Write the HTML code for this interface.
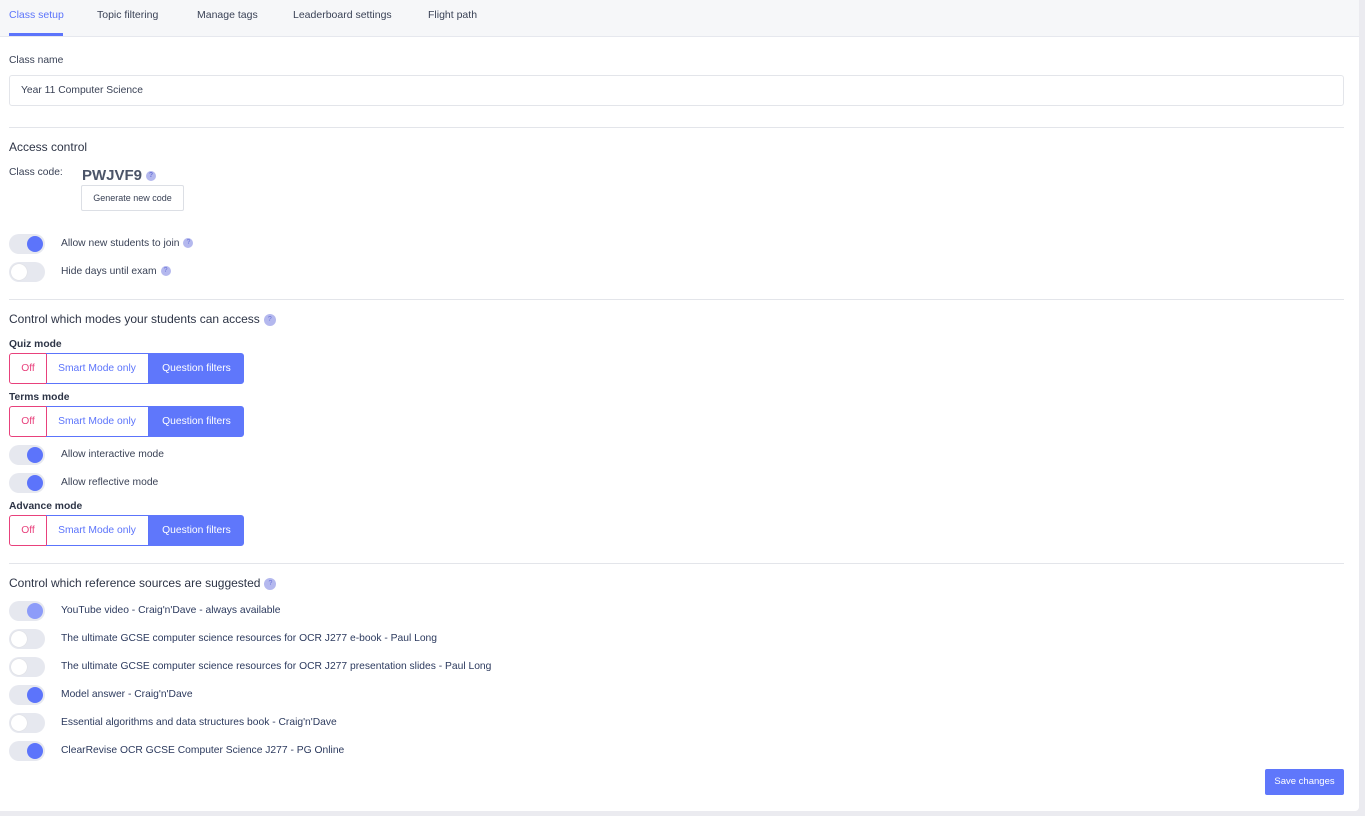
<!DOCTYPE html><html><head><style>
body{margin:0;width:1365px;height:816px;background:#ebebf0;font-family:"Liberation Sans",sans-serif;color:#3a4256;font-size:10.3px;position:relative;overflow:hidden}
.card{position:absolute;left:0;top:0;width:1359px;height:811px;background:#fff;border-radius:0 0 4px 0}
.tabs{position:absolute;left:0;top:0;width:1359px;height:36px;background:#f6f7f9;border-bottom:1px solid #e6e8ee}
.tab{position:absolute;top:9px;font-size:10.5px;color:#3a4256}
.a{position:absolute}
hr{position:absolute;left:9px;width:1335px;border:0;border-top:1px solid #e3e5ea;margin:0}
.h{position:absolute;left:9px;font-size:12px;color:#2d3446}
.q{display:inline-block;width:10px;height:10px;border-radius:50%;background:#b4b8ee;color:#6c74d8;font-size:7px;text-align:center;line-height:10px;vertical-align:middle;margin-left:4px}
.tg{position:absolute;left:9px;width:36px;height:20px;border-radius:10px;background:#e6e8ef}
.tg i{position:absolute;top:2px;width:16px;height:16px;border-radius:50%;background:#fff}
.tg.on i{left:18px;background:#5c74fb}.tg.no i{left:2px;box-shadow:0 0 1px #ccc}
.tg.dis i{left:18px;background:#8d9cf9}
.lb{position:absolute;left:61px}
.bg{position:absolute;left:9px;height:31px;width:235px}
.bg span{position:absolute;top:0;height:29px;line-height:29px;text-align:center;border:1px solid;font-size:10.3px}
.bg .o{left:0;width:36px;border-color:#e8417c;color:#e8417c;border-radius:3px 0 0 3px}
.bg .sm{left:37px;width:102px;border-color:#5c74fb;color:#5c74fb;border-left:0}
.bg .qf{left:140px;width:93px;background:#5f77fb;border-color:#5f77fb;color:#fff;border-radius:0 3px 3px 0}
.ml{position:absolute;left:9px;font-weight:bold;font-size:10.3px;color:#2d3446}
.r{color:#2c3a5e}
</style></head><body><div class="card">
<div class="tabs">
<div class="tab" style="left:9px;color:#5c74fb">Class setup</div>
<div class="a" style="left:9px;top:33px;width:54px;height:3px;background:#5c74fb"></div>
<div class="tab" style="left:97px">Topic filtering</div>
<div class="tab" style="left:197px">Manage tags</div>
<div class="tab" style="left:293px">Leaderboard settings</div>
<div class="tab" style="left:428px">Flight path</div>
</div>
<div class="a" style="left:9px;top:55px">Class name</div>
<div class="a" style="left:9px;top:75px;width:1333px;height:29px;border:1px solid #e3e5ea;border-radius:3px"><span class="a" style="left:11px;top:9px">Year 11 Computer Science</span></div>
<hr style="top:127px">
<div class="h" style="top:140px">Access control</div>
<div class="a" style="left:9px;top:167px">Class code:</div>
<div class="a" style="left:82px;top:167px;font-size:15px;font-weight:bold;color:#4b5468">PWJVF9<span class="q">?</span></div>
<div class="a" style="left:81px;top:185px;width:101px;height:24px;border:1px solid #dcdfe5;border-radius:2px;font-size:9px;text-align:center;line-height:24px">Generate new code</div>
<div class="tg on" style="top:234px"><i></i></div><div class="lb" style="top:238px">Allow new students to join<span class="q">?</span></div>
<div class="tg no" style="top:262px"><i></i></div><div class="lb" style="top:266px">Hide days until exam<span class="q">?</span></div>
<hr style="top:299px">
<div class="h" style="top:312px">Control which modes your students can access<span class="q" style="width:12px;height:12px;line-height:12px">?</span></div>
<div class="ml" style="top:339px">Quiz mode</div>
<div class="bg" style="top:353px"><span class="o">Off</span><span class="sm">Smart Mode only</span><span class="qf">Question filters</span></div>
<div class="ml" style="top:392px">Terms mode</div>
<div class="bg" style="top:406px"><span class="o">Off</span><span class="sm">Smart Mode only</span><span class="qf">Question filters</span></div>
<div class="tg on" style="top:445px"><i></i></div><div class="lb" style="top:449px">Allow interactive mode</div>
<div class="tg on" style="top:473px"><i></i></div><div class="lb" style="top:477px">Allow reflective mode</div>
<div class="ml" style="top:501px">Advance mode</div>
<div class="bg" style="top:515px"><span class="o">Off</span><span class="sm">Smart Mode only</span><span class="qf">Question filters</span></div>
<hr style="top:563px">
<div class="h" style="top:576px">Control which reference sources are suggested<span class="q" style="width:12px;height:12px;line-height:12px">?</span></div>
<div class="tg dis" style="top:601px"><i></i></div><div class="lb r" style="top:605px">YouTube video - Craig'n'Dave - always available</div>
<div class="tg no" style="top:629px"><i></i></div><div class="lb r" style="top:633px">The ultimate GCSE computer science resources for OCR J277 e-book - Paul Long</div>
<div class="tg no" style="top:657px"><i></i></div><div class="lb r" style="top:661px">The ultimate GCSE computer science resources for OCR J277 presentation slides - Paul Long</div>
<div class="tg on" style="top:685px"><i></i></div><div class="lb r" style="top:689px">Model answer - Craig'n'Dave</div>
<div class="tg no" style="top:713px"><i></i></div><div class="lb r" style="top:717px">Essential algorithms and data structures book - Craig'n'Dave</div>
<div class="tg on" style="top:741px"><i></i></div><div class="lb r" style="top:745px">ClearRevise OCR GCSE Computer Science J277 - PG Online</div>
<div class="a" style="left:1265px;top:769px;width:79px;height:26px;background:#5f77fb;border-radius:2px;color:#fff;font-size:9.5px;text-align:center;line-height:26px">Save changes</div>
</div></body></html>
